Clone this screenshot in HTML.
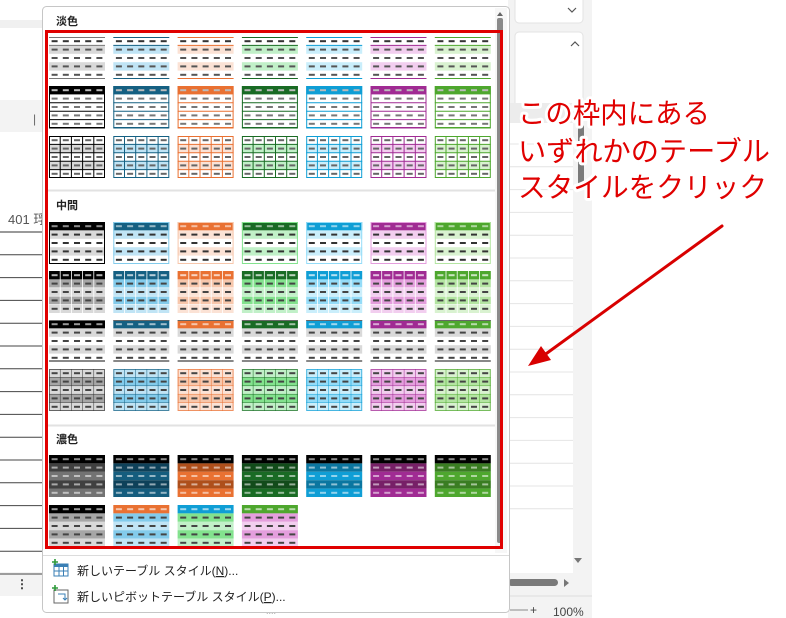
<!DOCTYPE html>
<html><head><meta charset="utf-8"><style>
html,body{margin:0;padding:0;background:#fff;width:786px;height:618px;overflow:hidden;font-family:"Liberation Sans","Noto Sans CJK JP",sans-serif}
</style></head><body>
<svg id="s" width="786" height="618" xmlns="http://www.w3.org/2000/svg" style="position:absolute;left:0;top:0">
<rect x="508" y="0" width="84" height="618" fill="#f3f3f3"/>
<rect x="515" y="-4" width="68" height="27" rx="4" fill="#fff" stroke="#e3e3e3"/>
<path d="M568 8 l4 4 l4 -4" fill="none" stroke="#555" stroke-width="1.2"/>
<rect x="515" y="32" width="68" height="80" rx="4" fill="#fff" stroke="#e3e3e3"/>
<path d="M571 46 l4 -4 l4 4" fill="none" stroke="#555" stroke-width="1.2"/>
<rect x="508" y="103" width="65" height="20" fill="#ececec"/>
<rect x="508" y="123" width="65" height="450" fill="#fff"/>
<rect x="578" y="125" width="6" height="65" fill="#7a7a7a" rx="2"/>
<path d="M574 558 h8 l-4 5z" fill="#777"/>
<rect x="508" y="579" width="50" height="7" rx="3.5" fill="#7a7a7a"/>
<path d="M564 579 v8 l5 -4z" fill="#777"/>
<line x1="508" y1="596" x2="592" y2="596" stroke="#ddd"/>
<line x1="510" y1="610" x2="528" y2="610" stroke="#888"/>
<text x="530" y="614" font-size="12" fill="#444">+</text>
<text x="553" y="616" font-size="12" fill="#444">100%</text>
<rect x="0" y="0" width="42" height="618" fill="#fff"/>
<rect x="0" y="20" width="42" height="8" fill="#f0f0f0"/>
<rect x="0" y="100" width="42" height="32" fill="#f3f3f3"/>
<text x="33" y="123" font-size="12" fill="#666">|</text>
<text x="8" y="224" font-size="13" fill="#555" font-family="Liberation Sans,Noto Sans CJK JP,sans-serif">401 琈</text>
<rect x="0" y="572" width="42" height="24" fill="#f3f3f3"/>
<text x="16" y="588" font-size="12" fill="#333" font-weight="bold">⋮</text>
<g id="lines"></g>
<rect x="42.5" y="6.5" width="467" height="606" rx="4" fill="#fff" stroke="#c6c6c6"/>
<rect x="495" y="8" width="12" height="545" fill="#f7f7f7"/>
<rect x="497" y="18" width="6" height="525" fill="#8a8a8a" rx="2"/>
<path d="M497 16 l3 -4 l3 4z" fill="#666"/>
<text x="56" y="25" font-size="11" font-weight="bold" fill="#222">淡色</text>
<text x="56" y="209" font-size="11" font-weight="bold" fill="#222">中間</text>
<text x="56" y="443" font-size="11" font-weight="bold" fill="#222">濃色</text>
<line x1="45" y1="190.5" x2="495" y2="190.5" stroke="#e2e2e2" stroke-width="2"/>
<line x1="45" y1="425.5" x2="495" y2="425.5" stroke="#e2e2e2" stroke-width="2"/>
<g id="thumbs"></g>
<line x1="43" y1="555.5" x2="509" y2="555.5" stroke="#dcdcdc"/>
<g>
<rect x="54" y="564" width="14" height="12" fill="#fff" stroke="#3a7fb5"/>
<rect x="54" y="564" width="14" height="3" fill="#3a7fb5"/>
<line x1="59" y1="567" x2="59" y2="576" stroke="#3a7fb5"/><line x1="63.5" y1="567" x2="63.5" y2="576" stroke="#3a7fb5"/>
<line x1="54" y1="571" x2="68" y2="571" stroke="#3a7fb5"/>
<path d="M55 559 v6 M52 562 h6" stroke="#2e9a3a" stroke-width="1.6"/>
<rect x="54" y="590" width="14" height="13" fill="#fff" stroke="#666"/>
<path d="M58 594 h7 v6 M63 598 l2 2 l2 -2" fill="none" stroke="#3a7fb5"/>
<path d="M55 585 v6 M52 588 h6" stroke="#2e9a3a" stroke-width="1.6"/>
</g>
<text x="77" y="575" font-size="12" fill="#222">新しいテーブル スタイル(<tspan text-decoration="underline">N</tspan>)...</text>
<text x="77" y="601" font-size="12" fill="#222">新しいピボットテーブル スタイル(<tspan text-decoration="underline">P</tspan>)...</text>
<text x="266" y="614" font-size="9" fill="#aaa">....</text>
<rect x="46.5" y="31.5" width="455" height="516" fill="none" stroke="#e00000" stroke-width="3"/>
<g font-size="28" fill="#e00000" stroke="#fff" stroke-width="6" paint-order="stroke" stroke-linejoin="round" font-family="Liberation Sans,Noto Sans CJK JP,sans-serif">
<text x="518" y="123" textLength="192" lengthAdjust="spacingAndGlyphs">この枠内にある</text>
<text x="518" y="161" textLength="252" lengthAdjust="spacingAndGlyphs">いずれかのテーブル</text>
<text x="518" y="197" textLength="249" lengthAdjust="spacingAndGlyphs">スタイルをクリック</text>
</g>
<line x1="722" y1="226" x2="543" y2="356" stroke="#d80000" stroke-width="3" stroke-linecap="round"/>
<polygon points="528,366 551,360 541,346" fill="#d80000"/>
</svg>
<script>
var L='';
for(var k=0;k<16;k++){var y=232+k*22.8;L+='<line x1="0" y1="'+y+'" x2="42" y2="'+y+'" stroke="'+(k==0?'#999':'#444')+'" stroke-width="'+(k==0?2:1)+'"/>';}
for(var k=0;k<17;k++){var y=144+k*22.8;if(y>570)break;L+='<line x1="508" y1="'+y+'" x2="573" y2="'+y+'" stroke="#e4e4e4"/>';}
document.getElementById('lines').innerHTML=L;
var C=['#000000','#156082','#e97132','#196b24','#0f9ed5','#a02b93','#4ea72e'];
var LI=['#d9d9d9','#c0e4f5','#fbe2d5','#c1f0c8','#caeefb','#f2ceef','#d9f2d0'];
var MI=['#a6a6a6','#83cbeb','#f7c7ac','#83e28e','#94dcf8','#e49edd','#b4e5a2'];
var DK=['#404040','#0e4159','#ae4f1b','#124b1a','#0b76a0','#772067','#3a7d22'];
var DA=['#595959','#155d7e','#e97132','#196b24','#0f9ed5','#a02b93','#4ea72e'];
var s='',W=56,H=42,rh=8.4,cw=11.2;
function r(x,y,w,h,f){s+='<rect x="'+x+'" y="'+y+'" width="'+w+'" height="'+h+'" fill="'+f+'"/>';}
function ln(x1,y1,x2,y2,c,w){s+='<line x1="'+x1+'" y1="'+y1+'" x2="'+x2+'" y2="'+y2+'" stroke="'+c+'" stroke-width="'+(w||1)+'"/>';}
function dashes(X,Y,i,c){for(var j=0;j<5;j++)r(X+cw*j+2.6,Y+rh*i+3.2,6,2,c);}
function th(X,Y,k,t){
 var c=C[k],l=LI[k],m=MI[k];
 if(t=='L1'){r(X,Y+rh,W,rh,l);r(X,Y+3*rh,W,rh,l);var lc=k==0?'#777':c;ln(X,Y+.5,X+W,Y+.5,lc);ln(X,Y+rh,X+W,Y+rh,lc);ln(X,Y+H-.5,X+W,Y+H-.5,lc);
  for(var i=0;i<5;i++)dashes(X,Y,i,i==0?'#333':'#555');}
 if(t=='L2'){r(X,Y,W,rh,c);for(var i=1;i<5;i++)ln(X,Y+rh*i+rh,X+W,Y+rh*i+rh,c);s+='<rect x="'+(X+.5)+'" y="'+(Y+.5)+'" width="'+(W-1)+'" height="'+(H-1)+'" fill="none" stroke="'+c+'"/>';
  for(var i=0;i<5;i++)dashes(X,Y,i,i==0?'#bbb':'#777');}
 if(t=='L3'){r(X,Y+rh,W,rh,l);r(X,Y+3*rh,W,rh,l);for(var i=1;i<5;i++)ln(X,Y+rh*i,X+W,Y+rh*i,c);for(var j=1;j<5;j++)ln(X+cw*j,Y,X+cw*j,Y+H,c);s+='<rect x="'+(X+.5)+'" y="'+(Y+.5)+'" width="'+(W-1)+'" height="'+(H-1)+'" fill="none" stroke="'+c+'"/>';
  for(var i=0;i<5;i++)dashes(X,Y,i,'#666');}
 if(t=='M1'){r(X,Y,W,rh,c);r(X,Y+rh,W,rh,l);r(X,Y+3*rh,W,rh,l);s+='<rect x="'+(X+.5)+'" y="'+(Y+.5)+'" width="'+(W-1)+'" height="'+(H-1)+'" fill="none" stroke="'+(k==0?'#000':m)+'"/>';
  for(var i=0;i<5;i++)dashes(X,Y,i,i==0?'rgba(255,255,255,.55)':'#333');}
 if(t=='M2'){r(X,Y,W,rh,c);for(var i=1;i<5;i++)r(X,Y+rh*i,W,rh,i%2?m:l);for(var j=1;j<5;j++)ln(X+cw*j,Y,X+cw*j,Y+H,'#fff',.8);for(var i=2;i<5;i++)ln(X,Y+rh*i,X+W,Y+rh*i,'#fff',.6);
  for(var i=0;i<5;i++)dashes(X,Y,i,i==0?'rgba(255,255,255,.7)':'#444');}
 if(t=='M3'){r(X,Y,W,rh,c);r(X,Y+rh,W,rh,'#d9d9d9');r(X,Y+3*rh,W,rh,'#d9d9d9');ln(X,Y+H-1,X+W,Y+H-1,'#888',2);ln(X,Y+.5,X+W,Y+.5,'#666');
  for(var i=0;i<5;i++)dashes(X,Y,i,i==0?'rgba(255,255,255,.6)':'#444');}
 if(t=='M4'){for(var i=0;i<5;i++)r(X,Y+rh*i,W,rh,i%2?m:l);for(var i=1;i<5;i++)ln(X,Y+rh*i,X+W,Y+rh*i,k==0?'#333':c,.5);for(var j=1;j<5;j++)ln(X+cw*j,Y,X+cw*j,Y+H,k==0?'#333':c,.5);s+='<rect x="'+(X+.5)+'" y="'+(Y+.5)+'" width="'+(W-1)+'" height="'+(H-1)+'" fill="none" stroke="'+(k==0?'#333':c)+'" stroke-opacity=".7"/>';
  for(var i=0;i<5;i++)dashes(X,Y,i,'#444');}
 if(t=='D1'){r(X,Y,W,rh,'#000');for(var i=1;i<5;i++)r(X,Y+rh*i,W,rh,i%2?DK[k]:DA[k]);if(k==0){r(X,Y+rh*2,W,rh,'#737373');r(X,Y+rh*4,W,rh,'#737373');}
  for(var i=0;i<5;i++)dashes(X,Y,i,'rgba(255,255,255,.55)');}
}
var D2=[['#000','#a6a6a6','#d9d9d9'],['#e97132','#83cbeb','#c0e4f5'],['#0f9ed5','#83e28e','#c1f0c8'],['#4ea72e','#e49edd','#f2ceef']];
function cx(k){return 49+k*64.3;}
var rows=[[37,'L1'],[86,'L2'],[136,'L3'],[222,'M1'],[271,'M2'],[320,'M3'],[369,'M4'],[455,'D1']];
rows.forEach(function(rw){for(var k=0;k<7;k++)th(cx(k),rw[0],k,rw[1]);});
for(var k=0;k<4;k++){var X=cx(k),Y=505,d=D2[k];r(X,Y,W,rh,d[0]);for(var i=1;i<5;i++)r(X,Y+rh*i,W,rh,i%2?d[1]:d[2]);for(var i=0;i<5;i++)dashes(X,Y,i,i==0?'rgba(255,255,255,.6)':'#444');}
document.getElementById('thumbs').innerHTML=s;
</script>
</body></html>
